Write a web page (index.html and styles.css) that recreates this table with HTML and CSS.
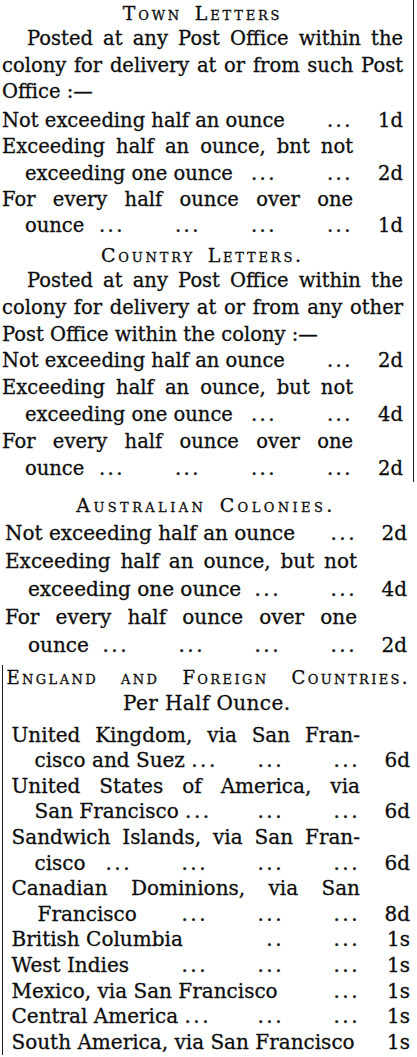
FILE: index.html
```html
<!DOCTYPE html>
<html lang="en">
<head>
<meta charset="utf-8">
<title>Postage Rates</title>
<link rel="stylesheet" href="styles.css">
</head>
<body>
<div class="page">
  <div class="upper">
    <section class="sec town">
      <div class="hd">Town Letters</div>
      <div class="pj indent">Posted at any Post Office within the</div>
      <div class="pj">colony for delivery at or from such Post</div>
      <div class="pl">Office :—</div>
      <div class="row first"><span class="lbl">Not exceeding half an ounce</span><span class="dt">...</span><span class="pr">1d</span></div>
      <div class="j">Exceeding half an ounce, bnt not</div>
      <div class="row ind"><span class="lbl">exceeding one ounce</span><span class="dt">...</span><span class="dt">...</span><span class="pr">2d</span></div>
      <div class="j">For every half ounce over one</div>
      <div class="row ind"><span class="lbl">ounce</span><span class="dt">...</span><span class="dt">...</span><span class="dt">...</span><span class="dt">...</span><span class="pr">1d</span></div>
    </section>
    <section class="sec country">
      <div class="hd">Country Letters.</div>
      <div class="pj indent">Posted at any Post Office within the</div>
      <div class="pj">colony for delivery at or from any other</div>
      <div class="pl">Post Office within the colony :—</div>
      <div class="row"><span class="lbl">Not exceeding half an ounce</span><span class="dt">...</span><span class="pr">2d</span></div>
      <div class="j">Exceeding half an ounce, but not</div>
      <div class="row ind"><span class="lbl">exceeding one ounce</span><span class="dt">...</span><span class="dt">...</span><span class="pr">4d</span></div>
      <div class="j">For every half ounce over one</div>
      <div class="row ind"><span class="lbl">ounce</span><span class="dt">...</span><span class="dt">...</span><span class="dt">...</span><span class="dt">...</span><span class="pr">2d</span></div>
    </section>
  </div>
  <section class="sec aus">
    <div class="hd hd-aus">Australian Colonies.</div>
    <div class="row"><span class="lbl">Not exceeding half an ounce</span><span class="dt">...</span><span class="pr">2d</span></div>
    <div class="j">Exceeding half an ounce, but not</div>
    <div class="row ind"><span class="lbl">exceeding one ounce</span><span class="dt">...</span><span class="dt">...</span><span class="pr">4d</span></div>
    <div class="j">For every half ounce over one</div>
    <div class="row ind"><span class="lbl">ounce</span><span class="dt">...</span><span class="dt">...</span><span class="dt">...</span><span class="dt">...</span><span class="pr">2d</span></div>
  </section>
  <section class="sec eng">
    <div class="hd hd-wide">England and Foreign Countries.</div>
    <div class="sub">Per Half Ounce.</div>
    <div class="list">
      <div class="j">United Kingdom, via San Fran-</div>
      <div class="row ind"><span class="lbl">cisco and Suez <span class="dd">...</span></span><span class="dt">...</span><span class="dt">...</span><span class="pr">6d</span></div>
      <div class="j">United States of America, via</div>
      <div class="row ind"><span class="lbl">San Francisco <span class="dd">...</span></span><span class="dt">...</span><span class="dt">...</span><span class="pr">6d</span></div>
      <div class="j">Sandwich Islands, via San Fran-</div>
      <div class="row ind"><span class="lbl">cisco</span><span class="dt">...</span><span class="dt">...</span><span class="dt">...</span><span class="dt">...</span><span class="pr">6d</span></div>
      <div class="j">Canadian Dominions, via San</div>
      <div class="row ind2"><span class="lbl">Francisco</span><span class="dt">...</span><span class="dt">...</span><span class="dt">...</span><span class="pr">8d</span></div>
      <div class="row"><span class="lbl">British Columbia</span><span class="dt">..</span><span class="dt">...</span><span class="pr">1s</span></div>
      <div class="row"><span class="lbl">West Indies</span><span class="dt">...</span><span class="dt">...</span><span class="dt">...</span><span class="pr">1s</span></div>
      <div class="row"><span class="lbl">Mexico, via San Francisco</span><span class="dt">...</span><span class="pr">1s</span></div>
      <div class="row"><span class="lbl">Central America <span class="dd">...</span></span><span class="dt">...</span><span class="dt">...</span><span class="pr">1s</span></div>
      <div class="row"><span class="lbl">South America, via San Francisco</span><span class="pr">1s</span></div>
    </div>
  </section>
</div>
</body>
</html>
```

FILE: styles.css
```css
* {
  box-sizing: border-box;
  margin: 0;
  padding: 0;
}

html, body {
  background: #ffffff;
}

body {
  margin: 0;
  color: #0d0d0d;
  font-family: "DejaVu Serif", "Liberation Serif", serif;
  font-size: 19.5px;
  width: 417px;
  overflow: hidden;
  -webkit-text-stroke: 0.3px #0d0d0d;
}

.page {
  width: 417px;
  height: 1057px;
}

/* upper column with its right-hand rule */
.upper {
  width: 414px;
  padding: 0 10px 0 2px;
  border-right: 1.5px solid #1c1c1c;
}

.hd {
  font-size: 19px;
  font-variant: small-caps;
  letter-spacing: 2.8px;
  word-spacing: 4px;
  text-align: center;
  white-space: nowrap;
}

.hd-aus {
  letter-spacing: 3.4px;
}

.hd-wide {
  font-size: 18px;
  text-align: justify;
  text-align-last: justify;
  letter-spacing: 2.4px;
  word-spacing: 0;
  margin-left: -5px;
}

.pj {
  text-align: justify;
  text-align-last: justify;
}

.indent {
  text-indent: 25px;
}

.row {
  display: flex;
  white-space: nowrap;
}

.lbl {
  flex: 1 1 auto;
  min-width: 0;
}

.ind .lbl {
  padding-left: 23px;
}

.ind2 .lbl {
  padding-left: 26px;
}

.dt {
  flex: 0 0 76px;
  text-align: right;
  letter-spacing: 2.5px;
}

.dd {
  letter-spacing: 2.5px;
}

.pr {
  flex: 0 0 50px;
  text-align: right;
}

.j {
  text-align: justify;
  text-align-last: justify;
  margin-right: 50px;
}

/* Town letters */
.town {
  line-height: 26.3px;
}
.town .row.first {
  margin-top: 3px;
}

/* Country letters */
.country {
  line-height: 26.8px;
}
.country .hd {
  line-height: 26.3px;
  margin-top: 2px;
}

/* Australian colonies */
.aus {
  font-size: 20px;
  line-height: 28px;
  padding: 0 10px 0 5px;
}
.aus .hd {
  line-height: 27px;
  margin-top: 10px;
}

/* England and foreign */
.eng {
  font-size: 20px;
  line-height: 25.6px;
  margin-top: 6px;
  margin-left: 1.5px;
  padding: 0 7px 0 9px;
  border-left: 1.5px solid #1c1c1c;
}
.eng .hd {
  line-height: 26px;
}

.sub {
  text-align: center;
  letter-spacing: 0.4px;
  padding-right: 8px;
}

.list {
  margin-top: 5.7px;
}
```
